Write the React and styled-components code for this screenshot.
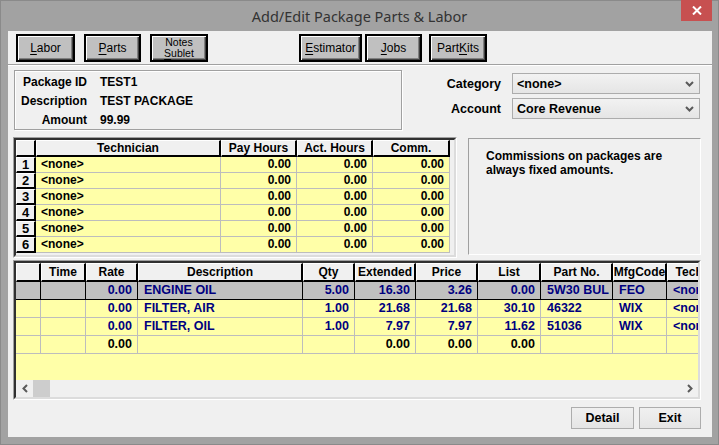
import React from 'react'
import styled, { createGlobalStyle } from 'styled-components'

const GlobalStyle = createGlobalStyle`
  html, body {
    margin: 0;
    padding: 0;
    background: #a2a2a2;
  }
  body {
    font-family: "Liberation Sans", Arial, sans-serif;
    font-size: 12px;
    color: #000;
  }
`

const YELLOW = '#ffffa8'
const GRIDLINE = '#bdbdbd'

const Window = styled.div`
  width: 719px;
  height: 445px;
  box-sizing: border-box;
  background: #a2a2a2;
  border: 1px solid #8a8a8a;
  display: flex;
  flex-direction: column;
`

const TitleBar = styled.div`
  height: 30px;
  display: grid;
  grid-template-columns: 1fr auto 1fr;
  align-items: start;
`

const Title = styled.div`
  grid-column: 2;
  font-family: "Noto Sans", "Open Sans", sans-serif;
  font-size: 14.5px;
  line-height: 30px;
  color: #333;
`

const CloseButton = styled.div`
  grid-column: 3;
  justify-self: end;
  margin-top: -1px;
  margin-right: 6px;
  width: 31px;
  height: 21px;
  background: #c75050;
  display: flex;
  align-items: center;
  justify-content: center;
`

const Client = styled.div`
  flex: 1;
  margin: 0 6px 7px 7px;
  background: #f0f0f0;
  display: flex;
  flex-direction: column;
`

const Toolbar = styled.div`
  display: flex;
  padding: 3px 0 0 8px;
`

const ToolButton = styled.div`
  box-sizing: border-box;
  width: ${p => p.$w}px;
  height: 28px;
  margin-left: ${p => p.$ml || 0}px;
  border: 2px solid #000;
  background: #c0c0c0;
  box-shadow: inset 1px 1px 0 #fff, inset -1px -1px 0 #404040, inset -2px -2px 0 #808080;
  display: flex;
  flex-direction: column;
  align-items: center;
  justify-content: center;
  font-size: ${p => (p.$small ? 10.5 : 12)}px;
  line-height: ${p => (p.$small ? 11 : 14)}px;
  color: #000;
  text-align: center;
  u {
    text-decoration: underline;
    text-underline-offset: 2px;
  }
`

const Separator = styled.div`
  margin-top: 2px;
  border-top: 1px solid #a0a0a0;
  border-bottom: 1px solid #fff;
`

const TopSection = styled.div`
  display: flex;
  margin-top: 4px;
  padding: 0 12px 0 6px;
  height: 60px;
`

const InfoBox = styled.div`
  box-sizing: border-box;
  width: 388px;
  height: 60px;
  border: 1px solid #a0a0a0;
  box-shadow: 1px 1px 0 #fff, inset 1px 1px 0 #fff;
  display: grid;
  grid-template-columns: 72px 1fr;
  grid-auto-rows: 19px;
  column-gap: 13px;
  align-items: center;
  padding-top: 1px;
  font-weight: bold;
`

const InfoLabel = styled.div`
  text-align: right;
`

const Fields = styled.div`
  margin-left: auto;
  display: grid;
  grid-template-columns: 61px 188px;
  grid-auto-rows: 21px;
  column-gap: 11px;
  row-gap: 4px;
  padding-top: 3px;
  align-items: center;
  font-weight: bold;
`

const FieldLabel = styled.div`
  text-align: right;
  font-size: 12.5px;
`

const Combo = styled.div`
  box-sizing: border-box;
  height: 21px;
  border: 1px solid #acacac;
  background: linear-gradient(#f2f2f2, #e5e5e5);
  display: flex;
  align-items: center;
  justify-content: space-between;
  padding: 0 5px 0 4px;
  font-size: 12.5px;
`

const MiddleSection = styled.div`
  display: flex;
  gap: 11px;
  margin-top: 7px;
  padding-left: 5px;
  height: 121px;
`

const Etched = styled.div`
  box-sizing: border-box;
  border: 1px solid;
  border-color: #a0a0a0 #fff #fff #a0a0a0;
`

const TechFrame = styled(Etched)`
  width: 444px;
  height: 121px;
`

const Sunken = styled.div`
  box-sizing: border-box;
  height: 100%;
  border: 2px solid;
  border-color: #303030 #dcdcdc #dcdcdc #303030;
  background: ${p => p.$bg || '#f0f0f0'};
  overflow: hidden;
  display: flex;
  flex-direction: column;
`

const Grid = styled.div`
  display: grid;
  grid-template-columns: ${p => p.$cols};
  grid-template-rows: ${p => p.$rows};
  width: max-content;
`

const HeadCell = styled.div`
  box-sizing: border-box;
  background: #f0f0f0;
  border-top: 1px solid #fff;
  border-left: 1px solid #fff;
  border-right: 2px solid #000;
  border-bottom: 2px solid #000;
  font-weight: bold;
  font-size: ${p => p.$fs || 12}px;
  display: flex;
  align-items: center;
  justify-content: center;
  white-space: nowrap;
  overflow: hidden;
`

const TechCell = styled.div`
  box-sizing: border-box;
  background: ${YELLOW};
  border-right: 1px solid ${GRIDLINE};
  border-bottom: 1px solid ${GRIDLINE};
  padding: 0 5px;
  line-height: 15px;
  font-weight: bold;
  text-align: ${p => p.$align || 'left'};
  white-space: nowrap;
  overflow: hidden;
`

const CommentBox = styled(Etched)`
  width: 233px;
  height: 117px;
  margin-top: 1px;
  padding: 10px 0 0 17px;
  font-weight: bold;
  line-height: 14px;
`

const PartsFrame = styled(Etched)`
  margin: 2px 11px 0 5px;
  height: 140px;
`

const PartsArea = styled.div`
  flex: 1;
  background: ${YELLOW};
  overflow: hidden;
`

const PartsCell = styled.div`
  box-sizing: border-box;
  background: ${p => (p.$sel ? '#c0c0c0' : YELLOW)};
  border-right: 1px solid ${p => (p.$sel ? '#000' : GRIDLINE)};
  border-bottom: 1px solid ${p => (p.$sel ? '#000' : GRIDLINE)};
  color: ${p => (p.$blue ? '#000080' : '#000')};
  padding: 0 5px 0 6px;
  line-height: 17px;
  font-weight: bold;
  font-size: 12.5px;
  text-align: ${p => p.$align};
  white-space: nowrap;
  overflow: hidden;
`

const ScrollBar = styled.div`
  height: 17px;
  flex: none;
  background: #f0f0f0;
  display: flex;
  align-items: center;
`

const ScrollArrow = styled.div`
  width: 17px;
  height: 17px;
  display: flex;
  align-items: center;
  justify-content: center;
`

const ScrollThumb = styled.div`
  width: 17px;
  height: 17px;
  background: #cdcdcd;
`

const ScrollTrack = styled.div`
  flex: 1;
`

const BottomBar = styled.div`
  display: flex;
  justify-content: flex-end;
  gap: 5px;
  margin-top: 7px;
  padding-right: 11px;
`

const PushButton = styled.div`
  box-sizing: border-box;
  width: ${p => p.$w}px;
  height: 22px;
  border: 1px solid #adadad;
  background: linear-gradient(#f0f0f0, #e5e5e5);
  display: flex;
  align-items: center;
  justify-content: center;
  font-weight: bold;
  font-size: 12.5px;
`

const Chevron = ({ dir = 'down' }) => {
  const pts = {
    down: '1,1 4.5,4.5 8,1',
    left: '5,1 1.5,4.5 5,8',
    right: '1,1 4.5,4.5 1,8',
  }[dir]
  const w = dir === 'down' ? 9 : 6
  const h = dir === 'down' ? 6 : 9
  return (
    <svg width={w} height={h} viewBox={`0 0 ${w} ${h}`}>
      <polyline points={pts} fill="none" stroke="#5a5a5a" strokeWidth="2" />
    </svg>
  )
}

const techRows = [1, 2, 3, 4, 5, 6]

const partCols = [
  { title: '', w: 25, key: 'h', align: 'left' },
  { title: 'Time', w: 45, key: 'time', align: 'right' },
  { title: 'Rate', w: 52, key: 'rate', align: 'right' },
  { title: 'Description', w: 165, key: 'desc', align: 'left' },
  { title: 'Qty', w: 52, key: 'qty', align: 'right' },
  { title: 'Extended', w: 61, key: 'ext', align: 'right' },
  { title: 'Price', w: 62, key: 'price', align: 'right' },
  { title: 'List', w: 63, key: 'list', align: 'right' },
  { title: 'Part No.', w: 72, key: 'part', align: 'left' },
  { title: 'MfgCode', w: 54, key: 'mfg', align: 'left' },
  { title: 'Technician', w: 80, key: 'tech', align: 'left' },
]

const parts = [
  { sel: true, blue: true, rate: '0.00', desc: 'ENGINE OIL', qty: '5.00', ext: '16.30', price: '3.26', list: '0.00', part: '5W30 BUL', mfg: 'FEO', tech: '<none>' },
  { blue: true, rate: '0.00', desc: 'FILTER, AIR', qty: '1.00', ext: '21.68', price: '21.68', list: '30.10', part: '46322', mfg: 'WIX', tech: '<none>' },
  { blue: true, rate: '0.00', desc: 'FILTER, OIL', qty: '1.00', ext: '7.97', price: '7.97', list: '11.62', part: '51036', mfg: 'WIX', tech: '<none>' },
  { rate: '0.00', ext: '0.00', price: '0.00', list: '0.00' },
]

export default function App() {
  return (
    <>
      <GlobalStyle />
      <Window>
        <TitleBar>
          <Title>Add/Edit Package Parts &amp; Labor</Title>
          <CloseButton>
            <svg width="10" height="9" viewBox="0 0 10 9">
              <path d="M1 0.5 L9 8.5 M9 0.5 L1 8.5" stroke="#fff" strokeWidth="2" />
            </svg>
          </CloseButton>
        </TitleBar>
        <Client>
          <Toolbar>
            <ToolButton $w={59}><span><u>L</u>abor</span></ToolButton>
            <ToolButton $w={57} $ml={9}><span><u>P</u>arts</span></ToolButton>
            <ToolButton $w={58} $ml={9} $small>
              <span>Notes</span>
              <span><u>S</u>ublet</span>
            </ToolButton>
            <ToolButton $w={63} $ml={91}><span><u>E</u>stimator</span></ToolButton>
            <ToolButton $w={57} $ml={3}><span><u>J</u>obs</span></ToolButton>
            <ToolButton $w={58} $ml={7}><span>Part<u>K</u>its</span></ToolButton>
          </Toolbar>
          <Separator />

          <TopSection>
            <InfoBox>
              <InfoLabel>Package ID</InfoLabel>
              <div>TEST1</div>
              <InfoLabel>Description</InfoLabel>
              <div>TEST PACKAGE</div>
              <InfoLabel>Amount</InfoLabel>
              <div>99.99</div>
            </InfoBox>
            <Fields>
              <FieldLabel>Category</FieldLabel>
              <Combo>
                <span>&lt;none&gt;</span>
                <Chevron />
              </Combo>
              <FieldLabel>Account</FieldLabel>
              <Combo>
                <span>Core Revenue</span>
                <Chevron />
              </Combo>
            </Fields>
          </TopSection>

          <MiddleSection>
            <TechFrame>
              <Sunken>
                <Grid $cols="20px 185px 76px 76px 77px" $rows="17px repeat(6, 16px)">
                  <HeadCell />
                  <HeadCell>Technician</HeadCell>
                  <HeadCell>Pay Hours</HeadCell>
                  <HeadCell>Act. Hours</HeadCell>
                  <HeadCell>Comm.</HeadCell>
                  {techRows.map(n => (
                    <React.Fragment key={n}>
                      <HeadCell $fs={13}>{n}</HeadCell>
                      <TechCell>&lt;none&gt;</TechCell>
                      <TechCell $align="right">0.00</TechCell>
                      <TechCell $align="right">0.00</TechCell>
                      <TechCell $align="right">0.00</TechCell>
                    </React.Fragment>
                  ))}
                </Grid>
              </Sunken>
            </TechFrame>
            <CommentBox>
              Commissions on packages are
              <br />
              always fixed amounts.
            </CommentBox>
          </MiddleSection>

          <PartsFrame>
            <Sunken>
              <PartsArea>
                <Grid
                  $cols={partCols.map(c => `${c.w}px`).join(' ')}
                  $rows="19px repeat(4, 18px)"
                >
                  {partCols.map(c => (
                    <HeadCell key={c.key}>{c.title}</HeadCell>
                  ))}
                  {parts.map((row, i) => (
                    <React.Fragment key={i}>
                      {partCols.map(c => (
                        <PartsCell key={c.key} $sel={row.sel} $blue={row.blue} $align={c.align}>
                          {row[c.key] || ''}
                        </PartsCell>
                      ))}
                    </React.Fragment>
                  ))}
                </Grid>
              </PartsArea>
              <ScrollBar>
                <ScrollArrow><Chevron dir="left" /></ScrollArrow>
                <ScrollThumb />
                <ScrollTrack />
                <ScrollArrow><Chevron dir="right" /></ScrollArrow>
              </ScrollBar>
            </Sunken>
          </PartsFrame>

          <BottomBar>
            <PushButton $w={63}>Detail</PushButton>
            <PushButton $w={62}>Exit</PushButton>
          </BottomBar>
        </Client>
      </Window>
    </>
  )
}
